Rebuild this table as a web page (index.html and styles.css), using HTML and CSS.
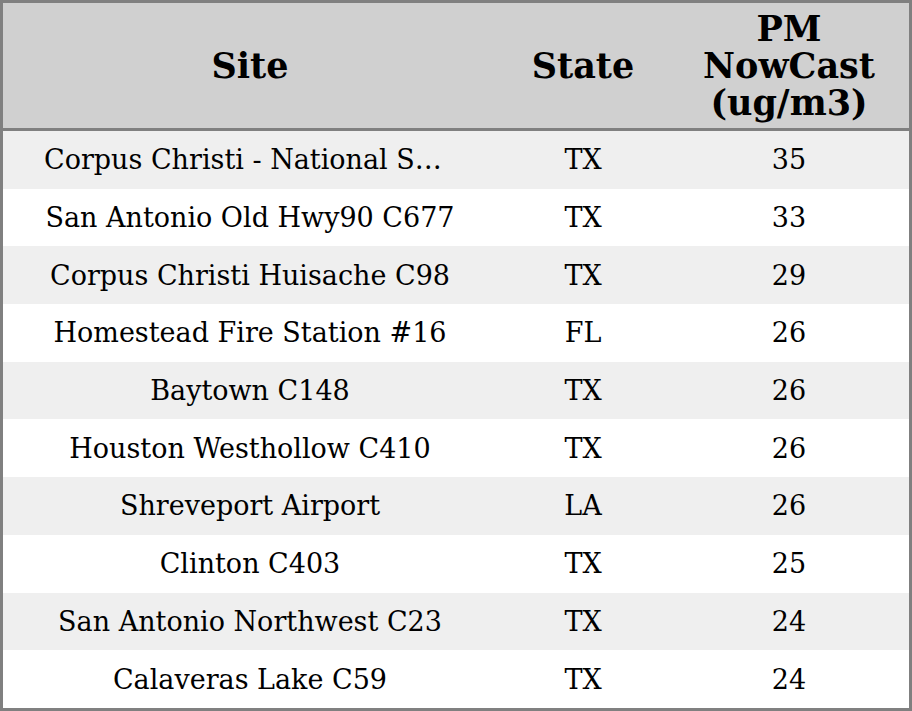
FILE: index.html
```html
<!DOCTYPE html>
<html>
<head>
<meta charset="utf-8">
<link rel="stylesheet" href="styles.css">
</head>
<body>
<table class="grid">
  <colgroup>
    <col class="c-site">
    <col class="c-state">
    <col class="c-pm">
  </colgroup>
  <thead>
    <tr>
      <th>Site</th>
      <th>State</th>
      <th>PM<br>NowCast<br>(ug/m3)</th>
    </tr>
  </thead>
  <tbody>
    <tr><td><div class="clip">Corpus Christi - National Seashore</div></td><td>TX</td><td>35</td></tr>
    <tr><td><div class="clip">San Antonio Old Hwy90 C677</div></td><td>TX</td><td>33</td></tr>
    <tr><td><div class="clip">Corpus Christi Huisache C98</div></td><td>TX</td><td>29</td></tr>
    <tr><td><div class="clip">Homestead Fire Station #16</div></td><td>FL</td><td>26</td></tr>
    <tr><td><div class="clip">Baytown C148</div></td><td>TX</td><td>26</td></tr>
    <tr><td><div class="clip">Houston Westhollow C410</div></td><td>TX</td><td>26</td></tr>
    <tr><td><div class="clip">Shreveport Airport</div></td><td>LA</td><td>26</td></tr>
    <tr><td><div class="clip">Clinton C403</div></td><td>TX</td><td>25</td></tr>
    <tr><td><div class="clip">San Antonio Northwest C23</div></td><td>TX</td><td>24</td></tr>
    <tr><td><div class="clip">Calaveras Lake C59</div></td><td>TX</td><td>24</td></tr>
  </tbody>
</table>
</body>
</html>
```
FILE: styles.css
```css
html, body {
  margin: 0;
  padding: 0;
  background: #ffffff;
}
.grid {
  width: 912px;
  height: 711px;
  border-collapse: separate;
  border-spacing: 0;
  border: 3px solid #808080;
  table-layout: fixed;
  font-family: "DejaVu Serif", serif;
  color: #000;
}
.c-site { width: 494px; }
.c-state { width: 172px; }
.c-pm { width: 240px; }
.grid th {
  height: 125px;
  padding: 0;
  background: #d0d0d0;
  border-bottom: 3px solid #808080;
  font-size: 35px;
  font-weight: bold;
  line-height: 37px;
  text-align: center;
  vertical-align: middle;
}
.grid td {
  height: 57.7px;
  padding: 0;
  font-size: 27px;
  text-align: center;
  vertical-align: middle;
}
.grid tbody tr:nth-child(odd) td {
  background: #efefef;
}
.clip {
  padding: 0 41px;
  white-space: nowrap;
  overflow: hidden;
  text-overflow: ellipsis;
}
```
